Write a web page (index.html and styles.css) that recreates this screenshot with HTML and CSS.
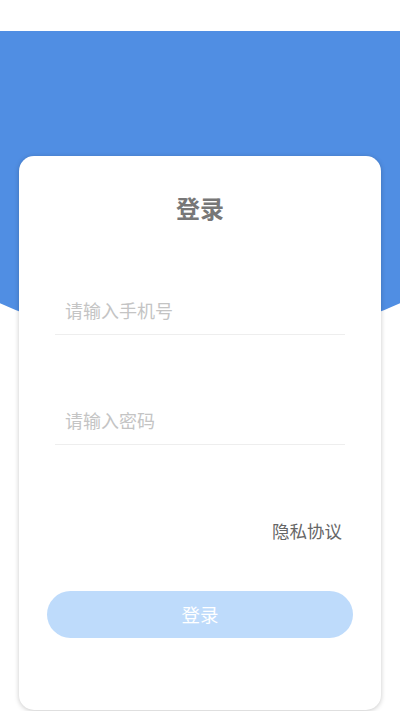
FILE: index.html
```html
<!DOCTYPE html>
<html lang="zh-CN">
<head>
<meta charset="utf-8">
<meta name="viewport" content="width=device-width, initial-scale=1">
<title>登录</title>
<link rel="stylesheet" href="styles.css">
</head>
<body>
<div class="page">
  <div class="topbar"></div>
  <div class="hero-bg"></div>
  <div class="card">
    <h1 class="title">登录</h1>
    <div class="field">
      <input class="input" type="tel" placeholder="请输入手机号">
    </div>
    <div class="field field-second">
      <input class="input" type="password" placeholder="请输入密码">
    </div>
    <div class="privacy-row">
      <span class="privacy">隐私协议</span>
    </div>
    <button class="login-btn" type="button">登录</button>
  </div>
</div>
</body>
</html>
```

FILE: styles.css
```css
* {
  box-sizing: border-box;
}

html, body {
  margin: 0;
  padding: 0;
  background: #ffffff;
}

body {
  font-family: "Noto Sans CJK SC", "Noto Sans", "Liberation Sans", sans-serif;
  width: 400px;
  height: 711px;
  overflow: hidden;
}

.page {
  position: relative;
  width: 400px;
  height: 711px;
  overflow: hidden;
}

.topbar {
  height: 31px;
  background: #ffffff;
}

.hero-bg {
  position: absolute;
  top: 31px;
  left: -100px;
  width: 600px;
  height: 312px;
  background: #508ee3;
  border-radius: 0 0 50% 50%;
  z-index: 0;
}

.card {
  position: relative;
  z-index: 1;
  margin: 125px 19px 0;
  height: 554px;
  background: #ffffff;
  border-radius: 15px;
  box-shadow: 0 1px 5px rgba(0, 0, 0, 0.22);
  padding: 34px 0 0;
  display: flex;
  flex-direction: column;
}

.title {
  margin: 0;
  text-align: center;
  font-size: 24px;
  line-height: 36px;
  font-weight: 700;
  color: #777777;
}

.field {
  margin: 64px 36px 0;
  border-bottom: 1px solid #eeeeee;
}

.field-second {
  margin-top: 65px;
}

.input {
  display: block;
  width: 100%;
  height: 44px;
  border: none;
  outline: none;
  background: transparent;
  padding: 0 10px 4px;
  font-family: inherit;
  font-size: 18px;
  color: #333333;
}

.input::placeholder {
  color: #c4c4c4;
}

.privacy-row {
  margin: 73px 36px 0;
  display: flex;
  justify-content: flex-end;
}

.privacy {
  font-size: 17.5px;
  line-height: 26px;
  color: #666666;
  padding-right: 3px;
}

.login-btn {
  margin: 47px 28px 0;
  height: 47px;
  border: none;
  border-radius: 24px;
  background: #bedbfb;
  color: #ffffff;
  font-family: inherit;
  font-size: 18.5px;
  padding: 0 0 2px;
  cursor: pointer;
}
```
